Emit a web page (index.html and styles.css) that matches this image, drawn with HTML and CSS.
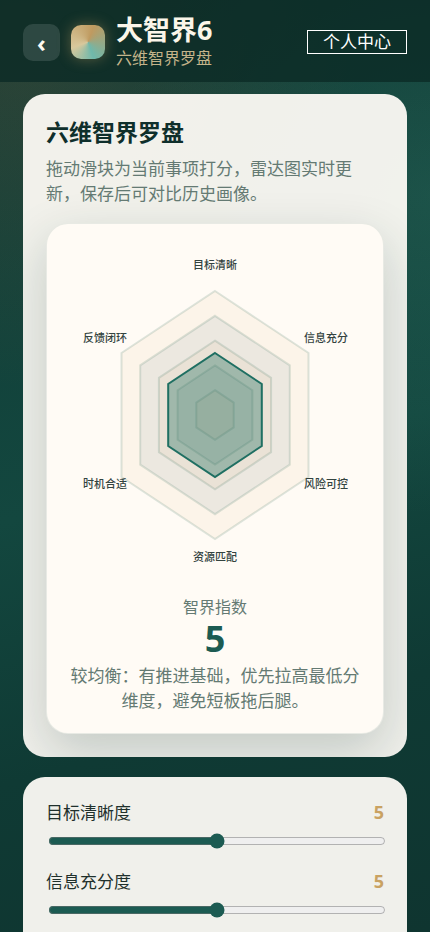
FILE: index.html
```
<!DOCTYPE html>
<html lang="zh-CN">
<head>
    <meta charset="UTF-8">
    <meta name="viewport" content="width=device-width, initial-scale=1.0">
    <title>大智界6</title>
    <link rel="stylesheet" href="styles.css">
</head>

<body>
    <header class="topbar">
        <button class="back" type="button" aria-label="返回">‹</button>
        <span class="logo"></span>
        <div class="brand">
            <h1>大智界6</h1>
            <p>六维智界罗盘</p>
        </div>
        <a class="profile" href="#profile">个人中心</a>
    </header>

    <main>
        <section class="panel">
            <h2>六维智界罗盘</h2>
            <p class="intro">拖动滑块为当前事项打分，雷达图实时更新，保存后可对比历史画像。</p>

            <div class="compass">
                <svg class="radar" viewBox="0 0 296 342" role="img" aria-label="六维雷达图">
                    <g class="rings">
                        <polygon class="warm" points="148,47 241.5,109 241.5,233 148,295 54.5,233 54.5,109"/>
                        <polygon class="cool" points="148,71.8 222.8,121.4 222.8,220.6 148,270.2 73.2,220.6 73.2,121.4"/>
                        <polygon class="warm" points="148,96.6 204.1,133.8 204.1,208.2 148,245.4 91.9,208.2 91.9,133.8"/>
                        <polygon class="cool" points="148,121.4 185.4,146.2 185.4,195.8 148,220.6 110.6,195.8 110.6,146.2"/>
                        <polygon class="warm" points="148,146.2 166.7,158.6 166.7,183.4 148,195.8 129.3,183.4 129.3,158.6"/>
                    </g>
                    <polygon class="score-area" points="148,109 194.8,140 194.8,202 148,233 101.2,202 101.2,140"/>
                    <g class="axis">
                        <text x="148" y="25">目标清晰</text>
                        <text x="259" y="98">信息充分</text>
                        <text x="259" y="244">风险可控</text>
                        <text x="148" y="317">资源匹配</text>
                        <text x="38" y="244">时机合适</text>
                        <text x="38" y="98">反馈闭环</text>
                    </g>
                </svg>
                <div class="score-label">智界指数</div>
                <div class="score">5</div>
                <p class="verdict">较均衡：有推进基础，优先拉高最低分维度，避免短板拖后腿。</p>
            </div>
        </section>

        <section class="panel sliders">
            <div class="slider">
                <label for="goal">目标清晰度</label>
                <output for="goal">5</output>
                <input id="goal" type="range" min="0" max="10" value="5">
            </div>
            <div class="slider">
                <label for="info">信息充分度</label>
                <output for="info">5</output>
                <input id="info" type="range" min="0" max="10" value="5">
            </div>
        </section>
    </main>

    <script>
        document.querySelectorAll(".slider input").forEach((input) => {
            input.addEventListener("input", () => {
                input.parentElement.querySelector("output").value = input.value;
            });
        });
    </script>
</body>
</html>
```
FILE: styles.css
```
* {
    box-sizing: border-box;
    margin: 0;
    padding: 0;
}

body {
    background:
        radial-gradient(circle at 5% 5%, rgba(201, 110, 60, 0.15), transparent 340px),
        radial-gradient(circle at 100% 20%, rgba(70, 150, 130, 0.2), transparent 320px),
        linear-gradient(165deg, #103a34 0%, #13473f 50%, #0f3a34 75%, #0f3530 100%) fixed;
    background-color: #0f3833;
    color: #1f302c;
    font-family: "Noto Sans", "Noto Sans CJK SC", sans-serif;
    font-size: 17px;
    line-height: 25px;
    min-height: 100vh;
}

.topbar {
    align-items: center;
    background-color: rgba(11, 42, 38, 0.8);
    display: flex;
    padding: 14px 23px 12px;
}

.back {
    background-color: rgba(255, 255, 255, 0.12);
    border: none;
    border-radius: 10px;
    color: #fffaf2;
    font-family: inherit;
    font-size: 24px;
    font-weight: 700;
    height: 37px;
    line-height: 37px;
    width: 37px;
}

.logo {
    background: conic-gradient(from 20deg, #bf9a60, #6fb8ab 140deg, #d8c89c 230deg, #bf9a60);
    border-radius: 10px;
    box-shadow: 0 0 14px rgba(201, 162, 98, 0.4);
    height: 34px;
    margin: 0 11px;
    width: 34px;
}

.brand h1 {
    color: #fbf6ea;
    font-size: 27px;
    line-height: 32px;
}

.brand p {
    color: #c4b48a;
    font-size: 16px;
    line-height: 24px;
}

.profile {
    border: 1px solid #fff;
    color: #fff;
    line-height: 22px;
    margin-left: auto;
    padding: 0 15px;
    text-decoration: none;
}

main {
    display: grid;
    gap: 20px;
    padding: 12px 23px;
}

.panel {
    background-color: rgba(255, 252, 246, 0.94);
    border-radius: 22px;
    overflow: hidden;
    padding: 23px;
}

.panel h2 {
    color: #0f2f2b;
    font-size: 23px;
    line-height: 30px;
}

.intro {
    color: #647a73;
    margin: 9px 0 17px;
}

.compass {
    background-color: #fffbf5;
    border: 1px solid rgba(28, 91, 82, 0.1);
    border-radius: 22px;
    box-shadow: 0 18px 50px rgba(15, 48, 44, 0.2);
    padding: 20px;
    text-align: center;
}

.radar {
    display: block;
    width: 100%;
}

.rings polygon {
    stroke: rgba(28, 91, 72, 0.15);
    stroke-width: 2;
}

.rings .warm {
    fill: rgba(210, 150, 90, 0.07);
}

.rings .cool {
    fill: rgba(28, 91, 110, 0.07);
}

.score-area {
    fill: rgba(30, 110, 95, 0.36);
    stroke: #1f6f62;
    stroke-width: 2;
}

.axis text {
    fill: #33433f;
    font-size: 11px;
    font-weight: 500;
    text-anchor: middle;
}

.score-label {
    color: #647a73;
    font-size: 16px;
    margin-top: 9px;
}

.score {
    color: #1c5b52;
    font-size: 36px;
    font-weight: 700;
    line-height: 37px;
}

.verdict {
    color: #647a73;
    margin-top: 6px;
}

.sliders {
    display: grid;
    gap: 20px;
    padding-bottom: 46px;
}

.slider {
    display: grid;
    grid-template-columns: 1fr auto;
    line-height: 26px;
}

.slider output {
    color: #c9a262;
    font-size: 18px;
    font-weight: 700;
    line-height: 24px;
}

.slider input {
    accent-color: #1c5b52;
    grid-column: 1 / -1;
    margin: 7px 2px 0;
    width: 100%;
}
```
